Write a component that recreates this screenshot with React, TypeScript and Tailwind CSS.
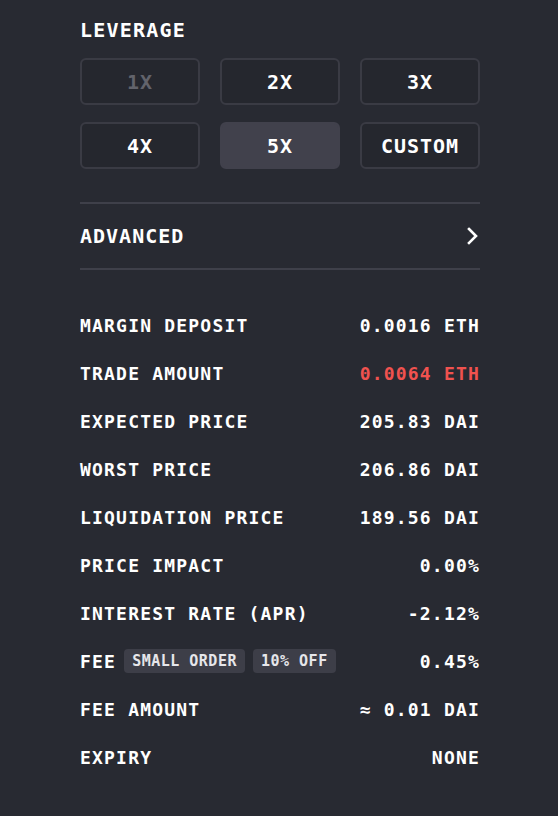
import React from "react";

const font = { fontFamily: '"DejaVu Sans Mono", "Liberation Mono", monospace' };

type Row = { label: React.ReactNode; value: string; red?: boolean };

export default function App() {
  const buttons = [
    { t: "1X", disabled: true },
    { t: "2X" },
    { t: "3X" },
    { t: "4X" },
    { t: "5X", active: true },
    { t: "CUSTOM" },
  ];
  const rows: Row[] = [
    { label: "MARGIN DEPOSIT", value: "0.0016 ETH" },
    { label: "TRADE AMOUNT", value: "0.0064 ETH", red: true },
    { label: "EXPECTED PRICE", value: "205.83 DAI" },
    { label: "WORST PRICE", value: "206.86 DAI" },
    { label: "LIQUIDATION PRICE", value: "189.56 DAI" },
    { label: "PRICE IMPACT", value: "0.00%" },
    { label: "INTEREST RATE (APR)", value: "-2.12%" },
    {
      label: (
        <span className="flex items-center">
          <span>FEE</span>
          <span className="ml-[8px] rounded-[4px] bg-[#3d3e48] px-[8px] h-[24px] leading-[24px] text-[15px] tracking-[0.5px] text-[#e6e6ea]">
            SMALL ORDER
          </span>
          <span className="ml-[8px] rounded-[4px] bg-[#3d3e48] px-[8px] h-[24px] leading-[24px] text-[15px] tracking-[0.5px] text-[#e6e6ea]">
            10% OFF
          </span>
        </span>
      ),
      value: "0.45%",
    },
    { label: "FEE AMOUNT", value: "≈ 0.01 DAI" },
    { label: "EXPIRY", value: "NONE" },
  ];
  return (
    <div className="min-h-[816px] w-full bg-[#282a32] text-white font-bold" style={font}>
      <div className="ml-[80px] w-[400px] pt-[16px]">
        <div className="h-[28px] leading-[28px] text-[20px] tracking-[1.2px]">LEVERAGE</div>
        <div className="mt-[14px] grid grid-cols-3 gap-x-[20px] gap-y-[17px]">
          {buttons.map((b) => (
            <div
              key={b.t}
              className={
                "h-[47px] rounded-[6px] flex items-center justify-center text-[20px] tracking-[1px] " +
                (b.active
                  ? "bg-[#41414c] border-2 border-[#41414c]"
                  : "border-2 border-[#3a3b44] bg-[#25272e]") +
                (b.disabled ? " text-[#62636b]" : " text-white")
              }
            >
              {b.t}
            </div>
          ))}
        </div>
        <div className="mt-[33px] h-[2px] bg-[#3f404a]" />
        <div className="h-[64px] flex items-center justify-between text-[20px] tracking-[1px]">
          <span>ADVANCED</span>
          <svg width="12" height="18" viewBox="0 0 12 18" className="mr-[1px]">
            <path d="M2 2 L9 9 L2 16" fill="none" stroke="white" strokeWidth="2.6" strokeLinecap="square" />
          </svg>
        </div>
        <div className="h-[2px] bg-[#3f404a]" />
        <div className="mt-[31px]">
          {rows.map((r, i) => (
            <div key={i} className="h-[48px] flex items-center justify-between text-[18px] tracking-[1.2px]">
              <span>{r.label}</span>
              <span className={r.red ? "text-[#f0524f]" : ""}>{r.value}</span>
            </div>
          ))}
        </div>
      </div>
    </div>
  );
}
